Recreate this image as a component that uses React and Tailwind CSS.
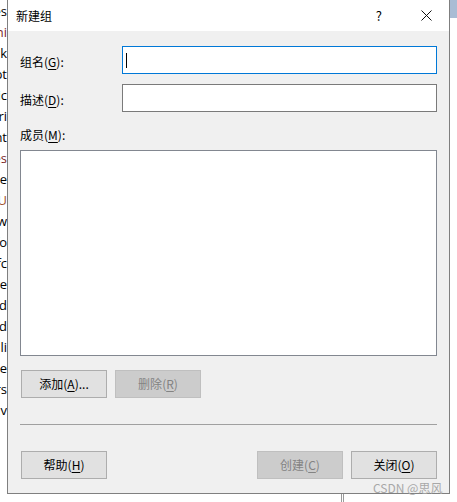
import React from 'react'

const font = { fontFamily: '"Noto Sans CJK SC", "Microsoft YaHei", sans-serif' }

const bgLines = [
  ['es', 'text-black'], ['ni', 'text-[#7a1f1f]'], ['k', 'text-black'], ['pt', 'text-black'],
  ['ric', 'text-black'], ['tri', 'text-black'], ['nt', 'text-black'], ['es', 'text-[#7a1f1f]'],
  ['pe', 'text-black'], ['IU', 'text-[#a0522d]'], ['w', 'text-black'], ['fo', 'text-black'],
  ['fc', 'text-black'], ['ve', 'text-black'], ['nd', 'text-black'], ['nd', 'text-black'],
  ['li', 'text-black'], ['te', 'text-black'], ['ers', 'text-black'], ['nv', 'text-black'],
]

function Label({ text, k }) {
  return (
    <span className="text-[12px] text-black">
      {text}(<span className="underline underline-offset-2">{k}</span>):
    </span>
  )
}

function Btn({ text, k, suffix = '', disabled }) {
  return (
    <button
      className={
        'w-[86px] h-[28px] text-[12px] border flex items-center justify-center ' +
        (disabled
          ? 'bg-[#cccccc] border-[#bfbfbf] text-[#838383]'
          : 'bg-[#e1e1e1] border-[#adadad] text-black')
      }
    >
      {text}(<span className="underline underline-offset-2">{k}</span>){suffix}
    </button>
  )
}

export default function App() {
  return (
    <div className="relative w-[457px] h-[502px] bg-white overflow-hidden" style={font}>
      {/* background app peeking out */}
      <div className="absolute left-0 top-0 w-[7px] overflow-hidden flex flex-col items-end pt-[1px]">
        {bgLines.map(([t, c], i) => (
          <div key={i} className={'h-[21px] leading-[21px] text-[13px] whitespace-nowrap ' + c} style={{ fontFamily: '"Segoe UI", "Open Sans", sans-serif' }}>
            {t}
          </div>
        ))}
      </div>
      <div className="absolute left-[450px] top-0 w-[7px] h-[18px] bg-[#a9bcd4]" />
      <div className="absolute left-[341px] top-[494px] w-[3px] h-[8px] border-x border-[#9a9a9a]" />

      {/* dialog */}
      <div className="absolute left-[7px] top-0 w-[443px] h-[494px] border border-[#7f7f7f] border-t-0 flex flex-col bg-[#f0f0f0]">
        <div className="h-[31px] bg-white flex items-center pl-[8px] pr-[16px]">
          <span className="text-[12px] text-black">新建组</span>
          <span className="ml-auto mr-[39px] text-[13px] text-black">?</span>
          <svg width="11" height="11" viewBox="0 0 11 11" className="mr-[1px]">
            <path d="M0.5 0.5 L10.5 10.5 M10.5 0.5 L0.5 10.5" stroke="#111" strokeWidth="1" />
          </svg>
        </div>

        <div className="flex flex-col px-[12px] flex-1">
          <div className="flex items-center mt-[15px] h-[28px]">
            <div className="w-[102px]"><Label text="组名" k="G" /></div>
            <div className="flex-1 h-[28px] bg-white border border-[#0078d7] flex items-center pl-[3px]">
              <div className="w-[1px] h-[15px] bg-black" />
            </div>
          </div>
          <div className="flex items-center mt-[10px] h-[28px]">
            <div className="w-[102px]"><Label text="描述" k="D" /></div>
            <div className="flex-1 h-[28px] bg-white border border-[#7a7a7a]" />
          </div>
          <div className="mt-[15px] h-[16px] flex items-center">
            <Label text="成员" k="M" />
          </div>
          <div className="mt-[7px] h-[206px] bg-white border border-[#828790]" />

          <div className="flex gap-[8px] mt-[14px] pl-[1px]">
            <Btn text="添加" k="A" suffix="..." />
            <Btn text="删除" k="R" disabled />
          </div>

          <div className="mt-[26px] h-[1px] bg-[#a0a0a0]" />

          <div className="flex mt-[26px] pl-[1px]">
            <Btn text="帮助" k="H" />
            <div className="ml-auto flex gap-[8px]">
              <Btn text="创建" k="C" disabled />
              <Btn text="关闭" k="O" />
            </div>
          </div>
        </div>
      </div>

      <div className="absolute left-[373px] top-[479px] text-[12px] text-[#a8a8a8] whitespace-nowrap">
        CSDN @思风
      </div>
    </div>
  )
}
